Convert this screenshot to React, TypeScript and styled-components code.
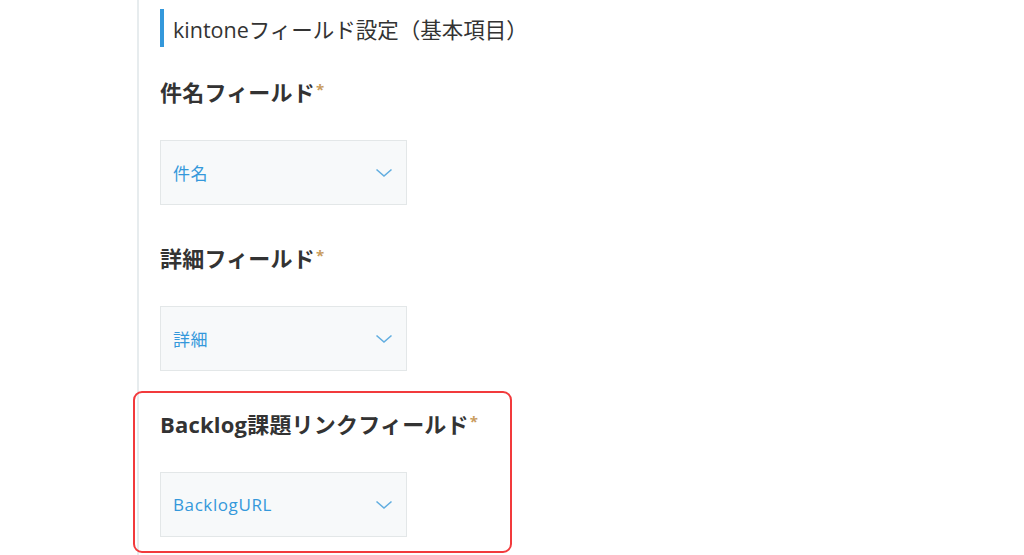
import React from 'react';
import styled, { createGlobalStyle } from 'styled-components';

const GlobalStyle = createGlobalStyle`
  html, body {
    margin: 0;
    padding: 0;
    background: #fff;
  }
  body {
    font-family: "Open Sans", "Noto Sans CJK JP", sans-serif;
    color: #333;
  }
`;

const Page = styled.div`
  min-height: 100vh;
  margin-left: 137px;
  padding: 9px 0 0 21px;
  border-left: 2px solid #e7ecee;
  box-sizing: border-box;
`;

const Heading = styled.h2`
  margin: 0;
  height: 38px;
  display: flex;
  align-items: center;
  padding-left: 9px;
  border-left: 4px solid #3498db;
  font-size: 21.5px;
  font-weight: normal;
  color: #333;
`;

const Section = styled.div<{ $highlight?: boolean }>`
  position: relative;
  margin-top: 33px;
  & + & {
    margin-top: 41px;
  }
  ${(p) =>
    p.$highlight &&
    `
    &::after {
      content: '';
      position: absolute;
      left: -27px;
      top: -21px;
      width: 375px;
      bottom: -16px;
      border: 2px solid #f23a3c;
      border-radius: 9px;
      pointer-events: none;
    }
  `}
`;

const Label = styled.div`
  font-size: 22px;
  line-height: 24px;
  font-weight: bold;
  color: #333;
  margin-bottom: 36px;
  letter-spacing: 0.2px;
`;

const Required = styled.span`
  position: relative;
  top: -6px;
  color: #c99c5e;
  font-size: 15px;
  line-height: 0;
  margin-left: 1px;
`;

const Select = styled.div`
  width: 247px;
  height: 65px;
  box-sizing: border-box;
  border: 1px solid #e3e7e8;
  background: #f7f9fa;
  display: flex;
  align-items: center;
  justify-content: space-between;
  padding: 0 13px 0 12px;
  font-size: 17px;
  letter-spacing: 0.6px;
  color: #3498db;
`;

const Chevron = () => (
  <svg width="18" height="10" viewBox="0 0 18 10" fill="none">
    <path d="M1.5 1.5 L9 8 L16.5 1.5" stroke="#62aee0" strokeWidth="1.6" />
  </svg>
);

const fields = [
  { label: '件名フィールド', value: '件名' },
  { label: '詳細フィールド', value: '詳細' },
  { label: 'Backlog課題リンクフィールド', value: 'BacklogURL', highlight: true },
];

export default function App() {
  return (
    <>
      <GlobalStyle />
      <Page>
        <Heading>kintoneフィールド設定（基本項目）</Heading>
        {fields.map((f) => (
          <Section key={f.label} $highlight={f.highlight}>
            <Label>
              {f.label}
              <Required>*</Required>
            </Label>
            <Select>
              <span>{f.value}</span>
              <Chevron />
            </Select>
          </Section>
        ))}
      </Page>
    </>
  );
}
